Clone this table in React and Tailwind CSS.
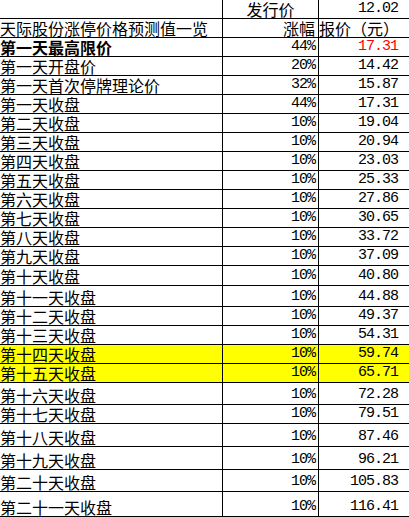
const cjk = "font-['Noto_Sans_CJK_SC','Noto_Sans',sans-serif]";
const mono = "font-['Liberation_Mono','Noto_Sans_CJK_SC',monospace] text-[15px] tracking-[-1px]";

const rows = [
  { name: '第一天最高限价', pct: '44%', price: '17.31', h: 'h-[19px]', bold: true, red: true },
  { name: '第一天开盘价', pct: '20%', price: '14.42', h: 'h-[19px]' },
  { name: '第一天首次停牌理论价', pct: '32%', price: '15.87', h: 'h-[19px]' },
  { name: '第一天收盘', pct: '44%', price: '17.31', h: 'h-[19px]' },
  { name: '第二天收盘', pct: '10%', price: '19.04', h: 'h-[19px]' },
  { name: '第三天收盘', pct: '10%', price: '20.94', h: 'h-[19px]' },
  { name: '第四天收盘', pct: '10%', price: '23.03', h: 'h-[19px]' },
  { name: '第五天收盘', pct: '10%', price: '25.33', h: 'h-[19px]' },
  { name: '第六天收盘', pct: '10%', price: '27.86', h: 'h-[19px]' },
  { name: '第七天收盘', pct: '10%', price: '30.65', h: 'h-[19px]' },
  { name: '第八天收盘', pct: '10%', price: '33.72', h: 'h-[19px]' },
  { name: '第九天收盘', pct: '10%', price: '37.09', h: 'h-[19px]' },
  { name: '第十天收盘', pct: '10%', price: '40.80', h: 'h-[20px]' },
  { name: '第十一天收盘', pct: '10%', price: '44.88', h: 'h-[21px]' },
  { name: '第十二天收盘', pct: '10%', price: '49.37', h: 'h-[19px]' },
  { name: '第十三天收盘', pct: '10%', price: '54.31', h: 'h-[19px]' },
  { name: '第十四天收盘', pct: '10%', price: '59.74', h: 'h-[19px]', yellow: true },
  { name: '第十五天收盘', pct: '10%', price: '65.71', h: 'h-[19px]', yellow: true },
  { name: '第十六天收盘', pct: '10%', price: '72.28', h: 'h-[22px]' },
  { name: '第十七天收盘', pct: '10%', price: '79.51', h: 'h-[19px]' },
  { name: '第十八天收盘', pct: '10%', price: '87.46', h: 'h-[23px]' },
  { name: '第十九天收盘', pct: '10%', price: '96.21', h: 'h-[23px]' },
  { name: '第二十天收盘', pct: '10%', price: '105.83', h: 'h-[22px]' },
  { name: '第二十一天收盘', pct: '10%', price: '116.41', h: 'h-[25px]' },
];

const Row = ({ h, yellow, children }) => (
  <div className={`grid grid-cols-[223px_96px_90px] border-b border-black ${h} ${yellow ? 'bg-[#ffff00]' : 'bg-white'}`}>
    {children}
  </div>
);

export default function App() {
  return (
    <div className="w-[409px] h-[517px] overflow-hidden bg-white text-black leading-[16px]">
      {/* issue price */}
      <Row h="h-[19px]">
        <div className="border-r border-black" />
        <div className={`${cjk} text-[16px] border-r border-black flex items-end justify-center pb-[1px]`}>发行价</div>
        <div className={`${mono} flex items-end justify-end pr-[11px] pb-[1px]`}>12.02</div>
      </Row>

      {/* header */}
      <Row h="h-[19px]">
        <div className={`${cjk} text-[16px] border-r border-black flex items-end pb-[1px] whitespace-nowrap`}>天际股份涨停价格预测值一览</div>
        <div className={`${cjk} text-[16px] border-r border-black flex items-end justify-end pr-[3px] pb-[1px]`}>涨幅</div>
        <div className={`${cjk} text-[16px] flex items-end justify-end pr-[10px] pb-[1px] whitespace-nowrap`}>报价（元）</div>
      </Row>

      {rows.map((r) => (
        <Row key={r.name} h={r.h} yellow={r.yellow}>
          <div className={`${cjk} text-[16px] border-r border-black flex items-end pb-[1px] whitespace-nowrap ${r.bold ? 'font-bold' : ''}`}>
            {r.name}
          </div>
          <div className={`${mono} border-r border-black flex items-end justify-end pr-[3px] pb-[1px]`}>{r.pct}</div>
          <div className={`${mono} flex items-end justify-end pr-[11px] pb-[1px] ${r.red ? 'text-[#ff0000]' : ''}`}>
            {r.price}
          </div>
        </Row>
      ))}
    </div>
  );
}
